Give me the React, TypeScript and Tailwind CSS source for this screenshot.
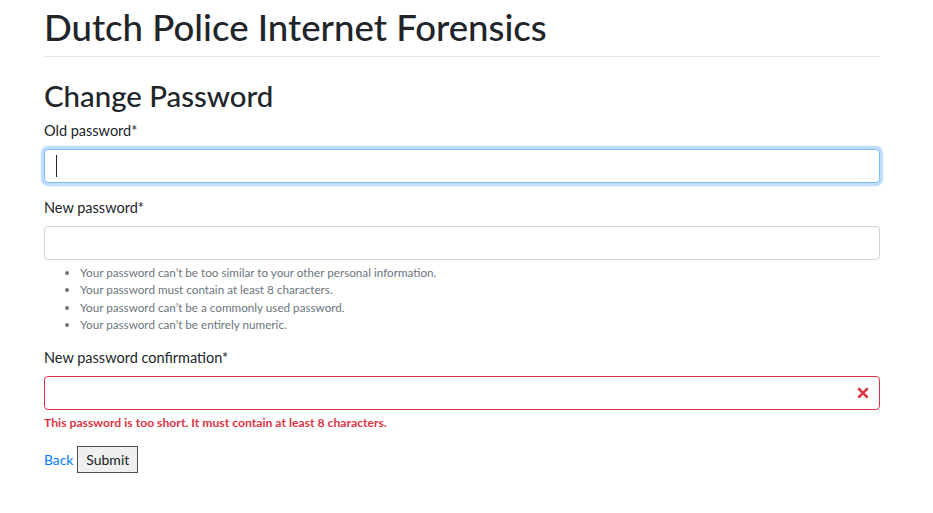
const helpItems = [
  "Your password can’t be too similar to your other personal information.",
  "Your password must contain at least 8 characters.",
  "Your password can’t be a commonly used password.",
  "Your password can’t be entirely numeric.",
];

function Field({
  label,
  focused,
  invalid,
}: {
  label: string;
  focused?: boolean;
  invalid?: boolean;
}) {
  return (
    <>
      <label className="block h-[24px] text-[14.5px] leading-[24px] text-[#212529]">{label}</label>
      <div className="relative mt-[6px] h-[34px]">
        <input
          type="password"
          readOnly
          className={`block h-[34px] w-full rounded-[4px] border bg-white px-3 outline-none ${
            focused
              ? "border-[#80bdff] shadow-[0_0_0_3.2px_rgba(0,123,255,0.25)]"
              : invalid
                ? "border-[#dc3545]"
                : "border-[#ced4da]"
          }`}
        />
        {focused && <span className="absolute left-[12px] top-[6px] h-[22px] w-px bg-[#212529]" />}
        {invalid && (
          <svg
            className="absolute right-[8px] top-[8px] h-[18px] w-[18px]"
            viewBox="-2 -2 7 7"
            fill="#dc3545"
          >
            <path stroke="#dc3545" strokeWidth="1" d="M0 0l3 3m0-3L0 3" />
            <circle r=".5" />
            <circle cx="3" r=".5" />
            <circle cy="3" r=".5" />
            <circle cx="3" cy="3" r=".5" />
          </svg>
        )}
      </div>
    </>
  );
}

export default function App() {
  return (
    <div className="min-h-[513px] bg-white font-['Lato',sans-serif] text-[#212529]">
      <div className="ml-[44px] w-[836px] pt-[3px]">
        <h1 className="h-[48px] text-[36.6px] font-medium leading-[48px] whitespace-nowrap">
          Dutch Police Internet Forensics
        </h1>
        <hr className="mt-[5px] border-t border-[rgba(0,0,0,0.1)]" />

        <h2 className="mt-[21px] h-[36px] text-[29.4px] font-medium leading-[36px]">Change Password</h2>

        <form className="mt-[5px]">
          <Field label="Old password*" focused />

          <div className="mt-[13px]">
            <Field label="New password*" />
          </div>
          <ul className="mt-[4px] list-disc pl-[36px] text-[11.7px] leading-[17.4px] text-[#6c757d] marker:text-[#6c757d]">
            {helpItems.map((item) => (
              <li key={item}>{item}</li>
            ))}
          </ul>

          <div className="mt-[12.5px]">
            <Field label="New password confirmation*" invalid />
          </div>
          <div className="mt-[3.5px] h-[17px] text-[12.2px] font-bold leading-[17px] text-[#dc3545]">
            This password is too short. It must contain at least 8 characters.
          </div>

          <div className="mt-[15px] flex items-baseline gap-[4px]">
            <a href="#" className="text-[13.8px] text-[#007bff]">
              Back
            </a>
            <button
              type="button"
              className="h-[27px] border border-[#505050] bg-[#efefef] px-[8px] text-[14px] font-normal leading-[25px] text-[#1a1a1a]"
            >
              Submit
            </button>
          </div>
        </form>
      </div>
    </div>
  );
}
